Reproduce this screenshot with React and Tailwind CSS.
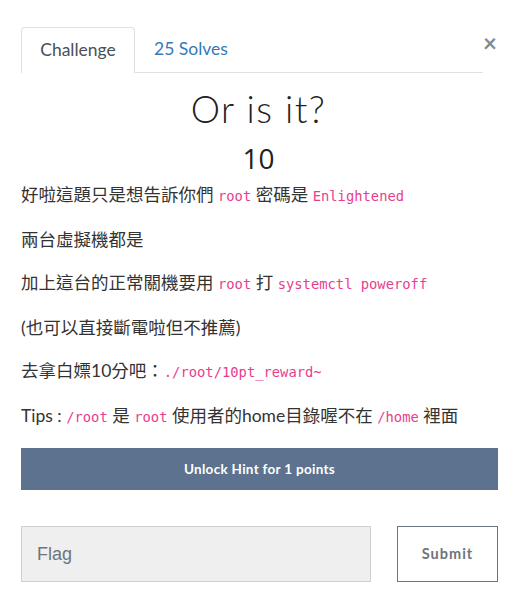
import React from "react";

const C = ({ children }) => (
  <code className="text-[#e83e8c] text-[13.8px]" style={{ fontFamily: '"DejaVu Sans Mono", "Liberation Mono", monospace' }}>
    {children}
  </code>
);

export default function App() {
  return (
    <div
      className="w-[517px] h-[609px] bg-white text-[#333] relative"
      style={{ fontFamily: 'Lato, "Noto Sans CJK TC", sans-serif' }}
    >
      <div className="pt-[27px] pl-[21px] pr-[34px]">
        <div className="flex border-b border-[#dee2e6] h-[46px]">
          <div className="w-[114px] border border-b-0 border-[#dee2e6] rounded-t-[4px] bg-white -mb-px flex items-center justify-center text-[17.5px] text-[#495057]">
            Challenge
          </div>
          <div className="w-[112px] flex items-center justify-center text-[17.5px] text-[#337ab7]">
            25 Solves
          </div>
        </div>
      </div>
      <button className="absolute left-[483px] top-[31px] text-[24px] leading-none text-[#888] font-bold">×</button>

      <div className="px-[21px]">
        <h2 className="text-center text-[37px] font-light text-[#222] mt-[12px] leading-[48px] tracking-[1.5px]">Or is it?</h2>
        <h4
          className="text-center text-[28px] font-normal text-[#222] leading-[40px] mt-[5px]"
          style={{ fontFamily: '"Open Sans", sans-serif' }}
        >
          10
        </h4>
        <div className="text-[17.5px] leading-[25px] text-[#333] mt-[4px]">
          <p className="mb-[18px]">好啦這題只是想告訴你們 <C>root</C> 密碼是 <C>Enlightened</C></p>
          <p className="mb-[18px]">兩台虛擬機都是</p>
          <p className="mb-[18px]">加上這台的正常關機要用 <C>root</C> 打 <C>systemctl poweroff</C></p>
          <p className="mb-[18px]">(也可以直接斷電啦但不推薦)</p>
          <p className="mb-[18px]">去拿白嫖10分吧：<C>./root/10pt_reward~</C></p>
          <p className="mb-[18px]">Tips : <C>/root</C> 是 <C>root</C> 使用者的home目錄喔不在 <C>/home</C> 裡面</p>
        </div>
        <div className="w-[477px] h-[42px] bg-[#5c728f] text-white font-bold text-[13.5px] flex items-center justify-center mt-[11px] tracking-[0.3px]">
          Unlock Hint for 1 points
        </div>
        <div className="flex mt-[36px]">
          <div
            className="w-[350px] shrink-0 h-[56px] bg-[#efefef] border border-[#ccd0d5] flex items-center pl-[15px] text-[18px] text-[#6c757d]"
            style={{ fontFamily: '"Liberation Sans", Arial, sans-serif' }}
          >
            Flag
          </div>
          <div className="ml-[26px] shrink-0 w-[101px] h-[56px] border border-[#6c757d] flex items-center justify-center font-bold text-[14.5px] text-[#6c757d] tracking-[1px]">
            Submit
          </div>
        </div>
      </div>
    </div>
  );
}
